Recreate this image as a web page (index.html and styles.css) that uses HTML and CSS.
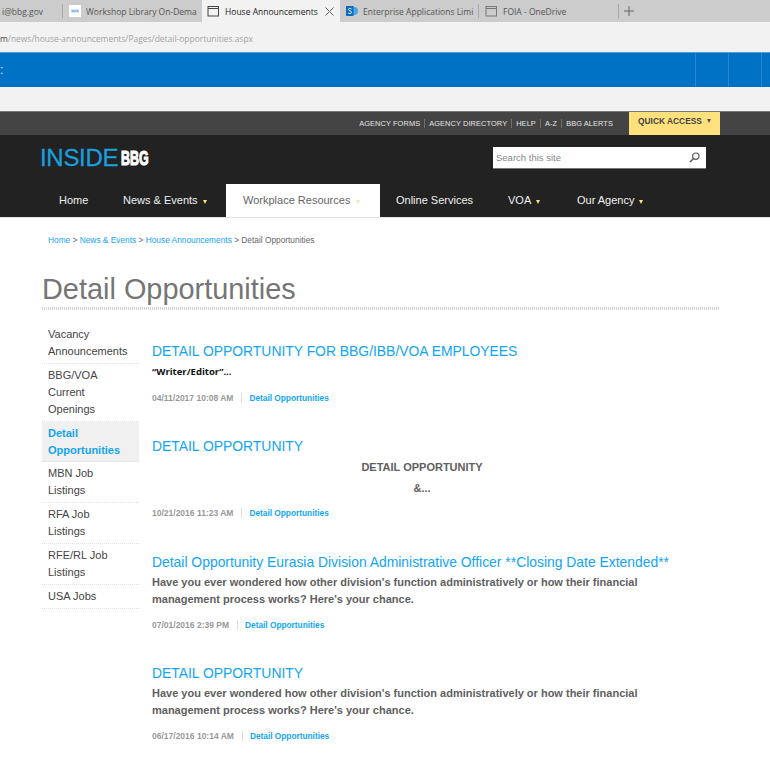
FILE: index.html
```html
<!DOCTYPE html>
<html lang="en">
<head>
<meta charset="utf-8">
<title>Detail Opportunities</title>
<link rel="stylesheet" href="styles.css">
</head>
<body>
<div class="tabs">
  <div class="tab tab-first"><span class="tab-text">i@bbg.gov</span></div>
  <div class="tab tab-ws">
    <svg class="fav" width="12" height="12" viewBox="0 0 12 12"><rect width="12" height="12" fill="#fff"/><rect x="2" y="4.500" width="8" height="3" fill="#b9d2ef"/><path d="M3 6h6" stroke="#5f95d6" stroke-dasharray="1.500 1"/></svg>
    <span class="tab-text">Workshop Library On-Dema</span>
  </div>
  <div class="tab tab-active">
    <svg class="fav" width="13" height="12" viewBox="0 0 13 12"><rect x="1" y="1.500" width="10.500" height="9.500" fill="none" stroke="#444"/><path d="M1 3.500h10.500" stroke="#444"/></svg>
    <span class="tab-text">House Announcements</span>
    <svg class="close" width="9" height="9" viewBox="0 0 9 9"><path d="M.5.500l8 8M8.500.500l-8 8" stroke="#666" fill="none"/></svg>
  </div>
  <div class="tab tab-ent">
    <svg class="fav" width="12" height="12" viewBox="0 0 12 12"><circle cx="8" cy="6" r="4" fill="#4aa5e0"/><rect y="1" width="7.500" height="10" fill="#0a6cc0"/><path d="M5.500 4C4.500 3.200 2.500 3.300 2.500 4.500S5.500 5.800 5.500 7.300 3.200 8.800 2.200 8" fill="none" stroke="#fff" stroke-width="1"/></svg>
    <span class="tab-text">Enterprise Applications Limi</span>
  </div>
  <div class="tab tab-foia">
    <svg class="fav" width="13" height="12" viewBox="0 0 13 12"><rect x="1" y="1.500" width="10.500" height="9.500" fill="none" stroke="#777"/><path d="M1 3.500h10.500" stroke="#777"/></svg>
    <span class="tab-text">FOIA - OneDrive</span>
  </div>
  <svg class="plus" width="10" height="10" viewBox="0 0 10 10"><path d="M5 0v10M0 5h10" stroke="#666" fill="none"/></svg>
</div>
<div class="address"><span class="addr-dark">m</span>/news/house-announcements/Pages/detail-opportunities.aspx</div>
<div class="bluebar">
  <span class="blue-mark">:</span>
  <span class="blue-cells"><i class="blue-cell"></i><i class="blue-cell"></i><i class="blue-cell"></i></span>
</div>
<div class="gapband"></div>

<div class="util">
  <nav class="util-links">
    <a class="util-link">AGENCY FORMS</a>
    <a class="util-link">AGENCY DIRECTORY</a>
    <a class="util-link">HELP</a>
    <a class="util-link">A-Z</a>
    <a class="util-link">BBG ALERTS</a>
  </nav>
  <div class="quick">QUICK ACCESS<span class="tri tri-dark"></span></div>
</div>
<header class="masthead">
  <div class="logo"><span class="logo-inside">INSIDE</span><span class="logo-bbg">BBG</span></div>
  <div class="search">
    <span class="search-text">Search this site</span>
    <svg width="11" height="11" viewBox="0 0 11 11"><circle cx="6.800" cy="4.200" r="3.200" fill="none" stroke="#555" stroke-width="1.200"/><path d="M4.500 6.500L1 10" stroke="#555" stroke-width="1.500"/></svg>
  </div>
</header>
<nav class="mainnav">
  <a class="nav-item nav-home">Home</a>
  <a class="nav-item nav-news">News &amp; Events<span class="tri"></span></a>
  <a class="nav-item nav-active">Workplace Resources<span class="tri tri-pale"></span></a>
  <a class="nav-item nav-online">Online Services</a>
  <a class="nav-item nav-voa">VOA<span class="tri"></span></a>
  <a class="nav-item nav-agency">Our Agency<span class="tri"></span></a>
</nav>

<main class="page">
  <div class="crumbs"><a>Home</a> &gt; <a>News &amp; Events</a> &gt; <a>House Announcements</a> &gt; Detail Opportunities</div>
  <h1 class="title">Detail Opportunities</h1>
  <div class="columns">
    <ul class="side">
      <li class="side-item">Vacancy Announcements</li>
      <li class="side-item">BBG/VOA Current Openings</li>
      <li class="side-item side-active">Detail Opportunities</li>
      <li class="side-item">MBN Job Listings</li>
      <li class="side-item">RFA Job Listings</li>
      <li class="side-item">RFE/RL Job Listings</li>
      <li class="side-item">USA Jobs</li>
    </ul>
    <div class="list">
      <article class="post post-1">
        <h2 class="post-title">DETAIL OPPORTUNITY FOR BBG/IBB/VOA EMPLOYEES</h2>
        <p class="post-body post-black">“Writer/Editor”...</p>
        <div class="meta"><span class="date">04/11/2017 10:08 AM</span><a class="cat">Detail Opportunities</a></div>
      </article>
      <article class="post post-2">
        <h2 class="post-title">DETAIL OPPORTUNITY</h2>
        <p class="post-body post-center">DETAIL OPPORTUNITY</p>
        <p class="post-body post-center post-amp">&amp;...</p>
        <div class="meta"><span class="date">10/21/2016 11:23 AM</span><a class="cat">Detail Opportunities</a></div>
      </article>
      <article class="post post-3">
        <h2 class="post-title">Detail Opportunity Eurasia Division Administrative Officer **Closing Date Extended**</h2>
        <p class="post-body">Have you ever wondered how other division's function administratively or how their financial management process works? Here's your chance.</p>
        <div class="meta"><span class="date">07/01/2016 2:39 PM</span><a class="cat">Detail Opportunities</a></div>
      </article>
      <article class="post post-4">
        <h2 class="post-title">DETAIL OPPORTUNITY</h2>
        <p class="post-body">Have you ever wondered how other division's function administratively or how their financial management process works? Here's your chance.</p>
        <div class="meta"><span class="date">06/17/2016 10:14 AM</span><a class="cat">Detail Opportunities</a></div>
      </article>
    </div>
  </div>
</main>
</body>
</html>
```

FILE: styles.css
```css
* { box-sizing: border-box; }
html, body { margin: 0; padding: 0; }
body {
  width: 770px;
  height: 770px;
  overflow: hidden;
  background: #fff;
  font-family: "Liberation Sans", Arial, sans-serif;
}
a { color: inherit; text-decoration: none; }

/* browser chrome */
.tabs {
  display: flex;
  align-items: center;
  height: 22px;
  background: #cccccc;
  font-family: "Open Sans", "Noto Sans", sans-serif;
  font-size: 8.500px;
  color: #555;
  white-space: nowrap;
}
.tab { display: flex; align-items: center; height: 22px; overflow: hidden; flex: none; }
.tab-first { width: 62px; padding-left: 2px; }
.tab-ws { width: 140px; height: 14px; padding-left: 6px; gap: 5px; border-left: 1px solid #a8a8a8; }
.tab-active { width: 138px; padding: 0 6px 0 5px; gap: 5px; background: #f2f2f2; color: #222; }
.tab-active .close { margin-left: auto; flex: none; }
.tab-ent { width: 138px; padding-left: 6px; gap: 5px; }
.tab-foia { width: 141px; height: 14px; padding-left: 6px; gap: 5px; border-left: 1px solid #a8a8a8; border-right: 1px solid #a8a8a8; }
.fav { flex: none; }
.plus { margin-left: 5px; flex: none; }
.address {
  height: 30px;
  padding: 11px 0 0 0;
  background: #f2f2f2;
  font-family: "Open Sans", "Noto Sans", sans-serif;
  font-size: 8.450px;
  line-height: 12px;
  color: #a3a3a3;
  white-space: nowrap;
}
.addr-dark { color: #444; }
.bluebar {
  display: flex;
  justify-content: space-between;
  height: 35px;
  background: #0072c6;
  border-top: 1px solid #4e9bd8;
  color: #dbe9f5;
  font-size: 12px;
}
.blue-mark { line-height: 34px; }
.blue-cells { display: flex; margin-right: 8px; }
.blue-cell { width: 33px; border-left: 1px solid #2a86cf; }
.blue-cell:last-child { width: 0; }
.gapband { height: 24px; background: #f2f2f2; }

/* utility bar */
.util {
  display: flex;
  justify-content: flex-end;
  height: 24px;
  padding-right: 50px;
  background: #444444;
  border-top: 1px solid #777;
}
.util-links { display: flex; align-items: center; margin-right: 12px; font-size: 7.400px; letter-spacing: 0.100px; color: #e4e4e4; }
.util-link { padding: 0 4px; line-height: 9px; border-left: 1px solid #6f6f6f; }
.util-link:first-child { border-left: 0; }
.quick {
  display: flex;
  align-items: center;
  width: 91px;
  height: 23px;
  padding: 0 0 6px 9px;
  background: #fee17c;
  color: #444;
  font-size: 8.400px;
  font-weight: bold;
  white-space: nowrap;
}
.tri {
  display: inline-block;
  margin-left: 5px;
  border-style: solid;
  border-width: 4px 2.500px 0;
  border-color: #fee17c transparent transparent;
  vertical-align: 0;
}
.tri-dark { border-top-color: #555; }
.tri-pale { margin-left: 6px; border-top-color: #f3e7b8; }

.masthead {
  display: flex;
  justify-content: space-between;
  height: 49px;
  padding: 12px 64px 0 40px;
  background: #222222;
}
.logo { display: flex; align-items: flex-start; white-space: nowrap; }
.logo-inside { color: #1a9fdc; font-size: 24px; line-height: 21px; letter-spacing: -0.300px; -webkit-text-stroke: 0.300px #1a9fdc; }
.logo-bbg {
  display: inline-block;
  width: 28px;
  margin: 2px 0 0 3px;
  color: #fff;
  font-size: 20px;
  font-weight: bold;
  line-height: 18px;
  -webkit-text-stroke: 1.200px #fff;
  transform: scaleX(0.62);
  transform-origin: left center;
}
.search {
  display: flex;
  align-items: center;
  justify-content: space-between;
  width: 213px;
  height: 22px;
  padding: 0 6px 0 3px;
  background: #fff;
  border-bottom: 1px solid #777;
  font-size: 9.500px;
  color: #888;
}

.mainnav {
  display: flex;
  height: 33px;
  background: #222222;
  color: #f0f0f0;
  font-size: 11px;
  white-space: nowrap;
}
.nav-item { display: block; line-height: 33px; }
.nav-home { margin-left: 59px; width: 64px; }
.nav-news { width: 103px; }
.nav-active { width: 154px; height: 33px; padding-left: 17px; background: #fff; color: #666; }
.nav-online { margin-left: 16px; width: 112px; }
.nav-voa { width: 69px; }

/* content */
.page { padding: 16px 50px 0 42px; border-top: 1px solid #e2e2e2; }
.crumbs { padding-left: 6px; font-size: 8.330px; line-height: 12px; color: #666; }
.crumbs a { color: #12a5f4; }
.title {
  margin: 27px 0 0;
  height: 37px;
  padding-bottom: 3px;
  background: repeating-linear-gradient(90deg, #d4d4d4 0 1px, transparent 1px 2px) left bottom / 100% 3px no-repeat;
  font-size: 28.900px;
  font-weight: normal;
  line-height: 33px;
  color: #757575;
}
.columns { display: flex; margin-top: 14px; }
.side { flex: none; width: 97px; margin: 0; padding: 0; list-style: none; }
.side-item {
  padding: 3px 15px 3px 6px;
  border-bottom: 1px dotted #e0e0e0;
  font-size: 11px;
  line-height: 17px;
  color: #444;
}
.side-item:first-child { padding-top: 2px; }
.side-active { padding-bottom: 2px; background: #f0f0f0; color: #12a5f4; font-weight: bold; }
.list { flex: 1; min-width: 0; padding-left: 13px; }
.post-title {
  margin: 0;
  font-size: 13.900px;
  font-weight: normal;
  line-height: 17px;
  color: #12a5f4;
  white-space: nowrap;
}
.post-body {
  margin: 0;
  width: 540px;
  font-size: 11px;
  font-weight: bold;
  line-height: 17px;
  color: #606060;
}
.post-black { font-family: "Open Sans", "Noto Sans", sans-serif; font-size: 9.500px; color: #111; }
.post-center { text-align: center; }
.post-amp { margin-top: 4px; }
.meta { display: flex; align-items: center; font-size: 8.300px; font-weight: bold; line-height: 10px; }
.date { font-size: 8.500px; color: #999; padding-right: 8px; border-right: 1px solid #ddd; }
.cat { margin-left: 7px; color: #12a5f4; }
.post-1 { padding-top: 19px; height: 106px; }
.post-1 .post-body { margin-top: 3px; }
.post-1 .meta { margin-top: 13px; }
.post-2 { padding-top: 8px; height: 116px; }
.post-2 .post-body:first-of-type { margin-top: 4px; }
.post-2 .meta { margin-top: 11px; }
.post-3 { padding-top: 8px; height: 111px; }
.post-3 .post-body { margin-top: 3px; }
.post-3 .meta { margin-top: 12px; }
.post-4 { padding-top: 8px; }
.post-4 .post-body { margin-top: 3px; }
.post-4 .meta { margin-top: 12px; }
```
